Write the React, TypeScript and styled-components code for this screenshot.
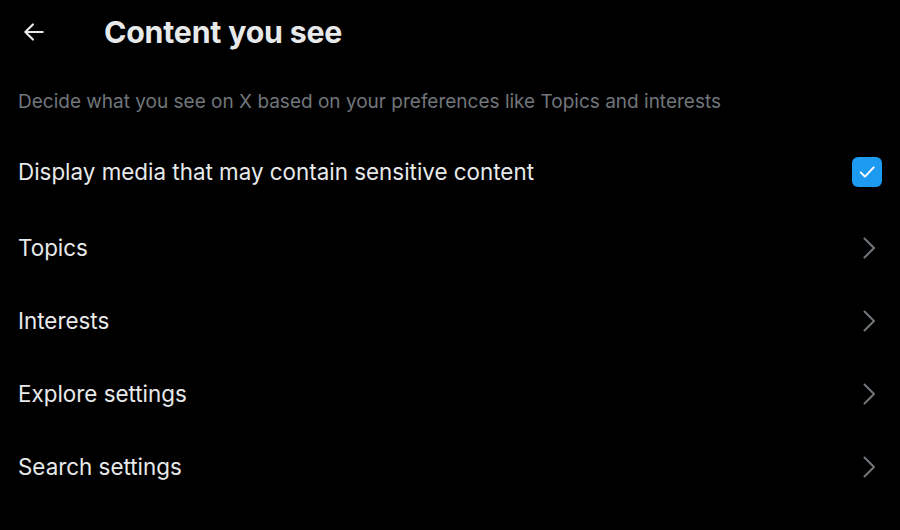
import React from 'react';
import styled, { createGlobalStyle } from 'styled-components';

const GlobalStyle = createGlobalStyle`
  html, body {
    margin: 0;
    padding: 0;
    background: #000;
  }

  body {
    font-family: Inter, "Noto Sans", sans-serif;
    color: #e7e9ea;
    -webkit-font-smoothing: antialiased;
  }
`;

const Page = styled.div`
  width: 900px;
  height: 530px;
  background: #000;
  overflow: hidden;
`;

const Header = styled.header`
  display: flex;
  align-items: center;
  height: 64px;
  padding-left: 18px;
`;

const BackButton = styled.button`
  display: flex;
  align-items: center;
  justify-content: center;
  width: 32px;
  height: 32px;
  padding: 0;
  border: 0;
  background: none;
  color: #e7e9ea;
  cursor: pointer;
`;

const Title = styled.h1`
  margin: 0 0 0 54px;
  font-size: 30.3px;
  font-weight: 700;
  letter-spacing: -0.2px;
`;

const Subtitle = styled.p`
  margin: 26px 0 19px;
  padding: 0 18px;
  font-size: 19px;
  line-height: 24px;
  color: #71767b;
`;

const Row = styled.div<{ $height: number }>`
  display: flex;
  align-items: center;
  justify-content: space-between;
  height: ${(p) => p.$height}px;
  padding: 0 18px;
  cursor: pointer;
`;

const Label = styled.span`
  font-size: 22.4px;
  line-height: 28px;
`;

const Checkbox = styled.span`
  display: flex;
  align-items: center;
  justify-content: center;
  width: 30px;
  height: 30px;
  border-radius: 6px;
  background: #1d9bf0;
`;

const Chevron = styled.span`
  display: flex;
  width: 30px;
  justify-content: center;
  margin-right: -2px;
  color: #71767b;
`;

const rows = ['Topics', 'Interests', 'Explore settings', 'Search settings'];

export default function App() {
  return (
    <Page>
      <GlobalStyle />
      <Header>
        <BackButton aria-label="Back">
          <svg width="26" height="26" viewBox="0 0 24 24" fill="none" stroke="currentColor" strokeWidth="2" strokeLinecap="round" strokeLinejoin="round">
            <path d="M20 12H4.5M11 5l-7 7 7 7" />
          </svg>
        </BackButton>
        <Title>Content you see</Title>
      </Header>
      <Subtitle>Decide what you see on X based on your preferences like Topics and interests</Subtitle>
      <Row $height={78}>
        <Label>Display media that may contain sensitive content</Label>
        <Checkbox>
          <svg width="20" height="20" viewBox="0 0 24 24" fill="none" stroke="#fff" strokeWidth="2.4" strokeLinecap="round" strokeLinejoin="round">
            <path d="M4.5 12.5l5 5L20 6.5" />
          </svg>
        </Checkbox>
      </Row>
      {rows.map((r) => (
        <Row key={r} $height={73}>
          <Label>{r}</Label>
          <Chevron>
            <svg width="24" height="24" viewBox="0 0 24 24" fill="none" stroke="currentColor" strokeWidth="2" strokeLinecap="round" strokeLinejoin="round">
              <path d="M7.5 2.5l9.5 9.5-9.5 9.5" />
            </svg>
          </Chevron>
        </Row>
      ))}
    </Page>
  );
}
